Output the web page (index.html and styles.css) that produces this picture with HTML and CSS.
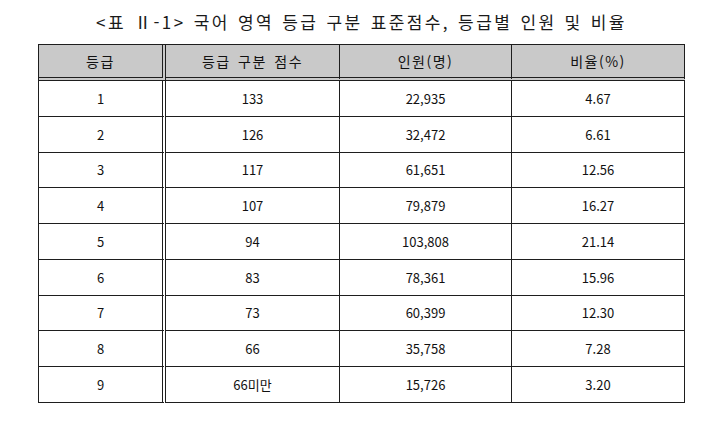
FILE: index.html
```html
<!DOCTYPE html>
<html lang="ko">
<head>
<meta charset="utf-8">
<link rel="stylesheet" href="styles.css">
</head>
<body>
<div class="wrap">
  <div class="title">&lt;표 Ⅱ-1&gt; 국어 영역 등급 구분 표준점수, 등급별 인원 및 비율</div>
  <table class="grade">
    <thead>
      <tr><th class="c1">등급</th><th class="c2">등급 구분 점수</th><th class="c3">인원(명)</th><th class="c4">비율(%)</th></tr>
    </thead>
    <tbody>
      <tr><td class="c1">1</td><td>133</td><td>22,935</td><td>4.67</td></tr>
      <tr><td class="c1">2</td><td>126</td><td>32,472</td><td>6.61</td></tr>
      <tr><td class="c1">3</td><td>117</td><td>61,651</td><td>12.56</td></tr>
      <tr><td class="c1">4</td><td>107</td><td>79,879</td><td>16.27</td></tr>
      <tr><td class="c1">5</td><td>94</td><td>103,808</td><td>21.14</td></tr>
      <tr><td class="c1">6</td><td>83</td><td>78,361</td><td>15.96</td></tr>
      <tr><td class="c1">7</td><td>73</td><td>60,399</td><td>12.30</td></tr>
      <tr><td class="c1">8</td><td>66</td><td>35,758</td><td>7.28</td></tr>
      <tr><td class="c1">9</td><td>66미만</td><td>15,726</td><td>3.20</td></tr>
    </tbody>
  </table>
</div>
</body>
</html>
```
FILE: styles.css
```css
html, body {
  margin: 0;
  padding: 0;
  background: #ffffff;
}
body {
  font-family: "Noto Sans CJK KR", "Noto Sans", sans-serif;
  color: #111111;
}
.wrap {
  width: 647px;
  padding: 12px 0 0 38px;
}
.title {
  height: 32px;
  text-align: center;
  font-size: 17px;
  line-height: 20px;
  letter-spacing: 2.4px;
  word-spacing: 1px;
  color: #1a1a1a;
}
.grade {
  width: 647px;
  border-collapse: separate;
  border-spacing: 0;
  border-top: 1px solid #1e1e1e;
  border-left: 1px solid #1e1e1e;
  table-layout: fixed;
  font-size: 13px;
}
.grade th, .grade td {
  padding: 0;
  text-align: center;
  font-weight: 400;
  border-right: 1px solid #1e1e1e;
  border-bottom: 1px solid #1e1e1e;
  vertical-align: middle;
}
.grade th {
  background: #c9c9c9;
  height: 32px;
  font-size: 14px;
  letter-spacing: 1.5px;
  word-spacing: 2px;
  border-bottom: 4px double #1e1e1e;
}
.grade td {
  height: 34.78px;
}
.grade .c1 {
  width: 123px;
  border-right: 4px double #1e1e1e;
}
.grade .c2 { width: 173px; }
.grade .c3 { width: 171px; }
.grade .c4 { width: 172px; }
```
